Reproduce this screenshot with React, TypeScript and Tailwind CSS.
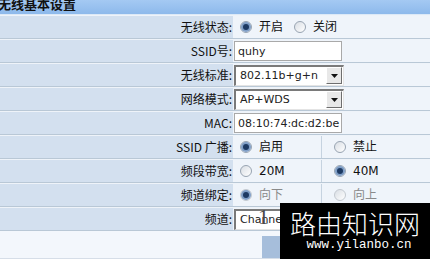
import React from "react";

const cjk = { fontFamily: '"Noto Sans CJK SC", sans-serif' };

function Radio({ checked = false, disabled = false }: { checked?: boolean; disabled?: boolean }) {
  return (
    <span
      className={`flex items-center justify-center w-[12px] h-[12px] rounded-full border ${
        disabled ? "border-[#c3c9d0]" : "border-[#98a4b2]"
      } bg-gradient-to-br from-[#d9dee4] to-white shrink-0`}
    >
      {checked && (
        <span className="w-[6px] h-[6px] rounded-full bg-[#1d3a63] ring-2 ring-[#7f9ec6]" />
      )}
    </span>
  );
}

function Select({ value, width = "w-[110px]" }: { value: string; width?: string }) {
  return (
    <div
      className={`${width} h-[21px] flex items-center bg-white border-t-2 border-l-2 border-t-[#7a7a7a] border-l-[#7a7a7a] border-b border-r border-b-[#e4e4e4] border-r-[#e4e4e4]`}
    >
      <span className="flex-1 pl-[4px] text-[11px] text-[#222] leading-none whitespace-nowrap overflow-hidden">
        {value}
      </span>
      <span className="w-[16px] h-[17px] mr-[1px] flex items-center justify-center bg-[#e8e8e8] border border-t-white border-l-white border-b-[#6e6e6e] border-r-[#6e6e6e]">
        <svg width="7" height="4" viewBox="0 0 7 4">
          <path d="M0 0h7L3.5 4z" fill="#111" />
        </svg>
      </span>
    </div>
  );
}

function Input({ value }: { value: string }) {
  return (
    <div className="w-[108px] h-[20px] flex items-center bg-white border border-[#a9a9a9] pl-[3px] text-[11px] text-[#222] leading-none whitespace-nowrap overflow-hidden">
      {value}
    </div>
  );
}

function Row({ label, children }: { label: string; children: React.ReactNode }) {
  return (
    <div className="h-[24px] flex border-t border-t-[#eef3f9] border-b border-b-[#b9c8d6]">
      <div
        className="w-[233px] shrink-0 bg-[#d3e0ef] flex items-center justify-end pr-[1px] text-[12px] text-[#111]"
        style={cjk}
      >
        {label}
      </div>
      <div className="flex-1 bg-[#eff4fa] flex items-center">{children}</div>
    </div>
  );
}

function Option({
  checked,
  disabled,
  text,
}: {
  checked?: boolean;
  disabled?: boolean;
  text: string;
}) {
  return (
    <div className="flex items-center gap-[7px]">
      <Radio checked={checked} disabled={disabled} />
      <span
        className={`text-[12px] leading-none ${disabled ? "text-[#8a8a8a]" : "text-[#111]"}`}
        style={{ fontFamily: '"DejaVu Sans", "Noto Sans CJK SC", sans-serif' }}
      >
        {text}
      </span>
    </div>
  );
}

function SplitCell({ left, right }: { left: React.ReactNode; right: React.ReactNode }) {
  return (
    <div className="flex h-full w-full">
      <div className="w-[89px] flex items-center pl-[7px] border-r border-r-[#c6d3e0]">{left}</div>
      <div className="flex-1 flex items-center pl-[12px]">{right}</div>
    </div>
  );
}

export default function App() {
  return (
    <div
      className="relative w-[430px] h-[259px] overflow-hidden bg-[#f3f7fc]"
      style={{ fontFamily: '"DejaVu Sans", "Noto Sans CJK SC", sans-serif' }}
    >
      {/* header */}
      <div className="h-[15px] bg-gradient-to-b from-[#a4c9f3] to-[#8db9eb] border-b border-b-[#dce9f7] overflow-hidden">
        <div className="-mt-[4px] -ml-[2px] text-[13px] font-bold text-[#111] leading-[16px]" style={cjk}>
          无线基本设置
        </div>
      </div>

      <Row label="无线状态:">
        <div className="flex items-center pl-[7px] gap-[11px]">
          <Option checked text="开启" />
          <Option text="关闭" />
        </div>
      </Row>
      <Row label="SSID号:">
        <div className="pl-[1px]">
          <Input value="quhy" />
        </div>
      </Row>
      <Row label="无线标准:">
        <div className="pl-[1px]">
          <Select value="802.11b+g+n" />
        </div>
      </Row>
      <Row label="网络模式:">
        <div className="pl-[1px]">
          <Select value="AP+WDS" />
        </div>
      </Row>
      <Row label="MAC:">
        <div className="pl-[1px]">
          <Input value="08:10:74:dc:d2:be" />
        </div>
      </Row>
      <Row label="SSID 广播:">
        <SplitCell left={<Option checked text="启用" />} right={<Option text="禁止" />} />
      </Row>
      <Row label="频段带宽:">
        <SplitCell left={<Option text="20M" />} right={<Option checked text="40M" />} />
      </Row>
      <Row label="频道绑定:">
        <SplitCell
          left={<Option checked disabled text="向下" />}
          right={<Option disabled text="向上" />}
        />
      </Row>
      <Row label="频道:">
        <div className="pl-[1px]">
          <Select value="Channel 6" width="w-[120px]" />
        </div>
      </Row>

      {/* bottom area with button */}
      <div className="h-[28px] flex items-end border-b border-b-[#d6dee8]">
        <div className="ml-[262px] w-[60px] h-[22px] bg-[#a6bedb]" />
      </div>

      {/* watermark overlay */}
      <div
        className="absolute left-[258px] top-[206px] text-[22px] text-[#4a4a4a] leading-none"
        style={{ fontFamily: '"Liberation Serif", serif' }}
      >
        1
      </div>
      <div className="absolute left-[280px] top-[203px] w-[150px] h-[56px] bg-black flex flex-col items-center">
        <div className="mt-[5px] text-[26px] leading-[30px] text-white font-light" style={cjk}>
          路由知识网
        </div>
        <div
          className="ml-[8px] text-[12.5px] leading-[14px] text-white"
          style={{ fontFamily: '"Liberation Mono", monospace' }}
        >
          www.yilanbo.cn
        </div>
      </div>
    </div>
  );
}
